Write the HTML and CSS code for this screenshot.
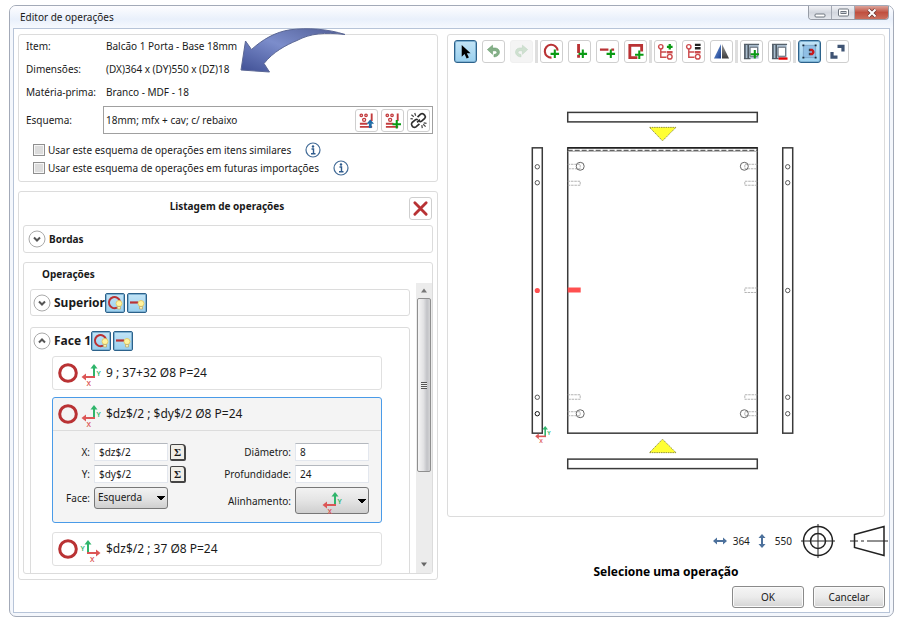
FILE: index.html
```html
<!DOCTYPE html>
<html lang="pt-BR">
<head>
<meta charset="utf-8">
<title>Editor de operações</title>
<link rel="stylesheet" href="styles.css">
</head>
<body>
<svg class="defs" aria-hidden="true">
  <defs>
    <linearGradient id="arrowFill" x1="0" y1="1" x2="1" y2="0">
      <stop offset="0" stop-color="#3f4f94"/><stop offset=".5" stop-color="#7c8dcb"/><stop offset="1" stop-color="#4f5c94"/>
    </linearGradient>
    <linearGradient id="mirrorBlue" x1="0" y1="0" x2="1" y2="1">
      <stop offset="0" stop-color="#7fa3dc"/><stop offset="1" stop-color="#173f91"/>
    </linearGradient>
    <linearGradient id="mirrorGray" x1="0" y1="0" x2="0" y2="1">
      <stop offset="0" stop-color="#9a9a9a"/><stop offset="1" stop-color="#3c3c3c"/>
    </linearGradient>
    <symbol id="plus" viewBox="0 0 10 10"><path d="M5 0v10M0 5h10" stroke="#0a9a14" stroke-width="2.400"/></symbol>
    <symbol id="axis-left" viewBox="0 0 20 20">
      <path d="M13 14.500V4" stroke="#2fb56b" stroke-width="2"/><path d="M9.500 5.500 13 1l3.500 4.500z" fill="#2fb56b"/>
      <path d="M14 14H4" stroke="#dc5656" stroke-width="2"/><path d="M5 10.500.500 14 5 17.500z" fill="#dc5656"/>
      <text x="15.500" y="12.500" class="axis-y">Y</text><text x="5.500" y="22.500" class="axis-x">X</text>
    </symbol>
    <symbol id="axis-right" viewBox="0 0 20 20">
      <path d="M7 14.500V4" stroke="#2fb56b" stroke-width="2"/><path d="M3.500 5.500 7 1l3.500 4.500z" fill="#2fb56b"/>
      <path d="M6 14h10" stroke="#dc5656" stroke-width="2"/><path d="M15 10.500l4.500 3.500-4.500 3.500z" fill="#dc5656"/>
      <text x="-.5" y="12" class="axis-y">Y</text><text x="9" y="22.500" class="axis-x">X</text>
    </symbol>
    <symbol id="ring" viewBox="0 0 20 20"><circle cx="10" cy="10" r="8.300" fill="none" stroke="#b93234" stroke-width="3"/></symbol>
    <symbol id="bulb" viewBox="0 0 8 10">
      <circle cx="4" cy="3.500" r="3" fill="#fff3a0" stroke="#e0c45c" stroke-width=".8"/><path d="M2.500 6.500h3v2.500h-3z" fill="#f7efb8" stroke="#b9a050" stroke-width=".6"/>
    </symbol>
    <symbol id="ring-bulb" viewBox="0 0 18 18">
      <path d="M11 13.700A5.600 5.600 0 1 1 14 7.500" fill="none" stroke="#b93234" stroke-width="2"/><use href="#bulb" x="9" y="6" width="8" height="10"/>
    </symbol>
    <symbol id="bar-bulb" viewBox="0 0 18 18">
      <path d="M2 8.500h8" stroke="#b93234" stroke-width="2.200"/><use href="#bulb" x="9" y="6" width="8" height="10"/>
    </symbol>
    <symbol id="scheme" viewBox="0 0 18 18">
      <g fill="none" stroke="#c33c3e" stroke-width="1.400"><circle cx="3.500" cy="3.500" r="1.300"/><circle cx="8.500" cy="3.500" r="1.300"/><circle cx="6.500" cy="8.300" r="1.600"/></g>
      <path d="M14.500 1.500v8M2 12.500h8M2 15.800h13" stroke="#c33c3e" stroke-width="2"/>
    </symbol>
    <symbol id="info" viewBox="0 0 16 16">
      <circle cx="8" cy="8" r="7" fill="#fff" stroke="#426b97" stroke-width="1.200"/>
      <circle cx="8" cy="4.500" r="1.200" fill="#2f5b8c"/><path d="M6.500 7h2v4.500M6 11.800h4.500" fill="none" stroke="#2f5b8c" stroke-width="1.400"/>
    </symbol>
    <symbol id="chevron-down" viewBox="0 0 18 18"><circle cx="9" cy="9" r="8" fill="#fff" stroke="#aaa"/><path d="M6 7.500l3 3 3-3" fill="none" stroke="#555" stroke-width="2"/></symbol>
    <symbol id="chevron-up" viewBox="0 0 18 18"><circle cx="9" cy="9" r="8" fill="#fff" stroke="#aaa"/><path d="M6 10.500l3-3 3 3" fill="none" stroke="#555" stroke-width="2"/></symbol>
    <symbol id="tree" viewBox="0 0 18 18">
      <path d="M4 6v9h6M4 9.500h6" fill="none" stroke="#cc4a4c" stroke-width="1.500"/>
      <circle cx="4" cy="4" r="2.300" fill="#fff" stroke="#cc4a4c" stroke-width="1.500"/><circle cx="13.500" cy="14.500" r="2.500" fill="#fff" stroke="#cc4a4c" stroke-width="1.500"/>
      <path d="M10.500 9.800h6" stroke="#cc4a4c" stroke-width="2.600"/>
    </symbol>
    <symbol id="panel" viewBox="0 0 18 18">
      <path d="M1.500 1.500h15v15h-15z" fill="#a9bccd"/>
      <path d="M1 1.500h16M1 16.500h7" stroke="#55606a" stroke-width="1.200"/>
      <path d="M2 2v14.500M5.500 2v14.500" stroke="#48525c" stroke-width="1.600"/>
      <path d="M7.500 4.500h8v9.500h-8z" fill="#fff" stroke="#5a6570"/>
    </symbol>
  </defs>
</svg>

<main class="window">
  <header class="titlebar">
    <h1 class="title">Editor de operações</h1>
    <div class="window-controls">
      <button class="wc" aria-label="Minimizar"><svg viewBox="0 0 22 12"><rect x="6" y="7" width="10" height="3" rx="1" fill="#fff" stroke="#6d747e"/></svg></button>
      <button class="wc" aria-label="Maximizar"><svg viewBox="0 0 22 12"><rect x="6.500" y="2" width="10" height="7" rx="1" fill="#fff" stroke="#6d747e"/><rect x="9" y="4.500" width="5" height="2" fill="#ccd2da" stroke="#6d747e"/></svg></button>
      <button class="wc wc-close" aria-label="Fechar"><svg viewBox="0 0 22 12"><path d="M7.500 2.500l7 7m0-7l-7 7" stroke="#6c3a36" stroke-width="3.600"/><path d="M7.500 2.500l7 7m0-7l-7 7" stroke="#fff" stroke-width="2"/></svg></button>
    </div>
  </header>

  <div class="content">
    <div class="left">
      <section class="box item-box">
        <dl class="facts">
          <dt>Item:</dt><dd>Balcão 1 Porta - Base 18mm</dd>
          <dt>Dimensões:</dt><dd>(DX)364 x (DY)550 x (DZ)18</dd>
          <dt>Matéria-prima:</dt><dd>Branco - MDF - 18</dd>
        </dl>
        <div class="scheme-row">
          <label for="scheme-name">Esquema:</label>
          <div class="scheme-field">
            <input id="scheme-name" type="text" value="18mm; mfx + cav; c/ rebaixo">
            <button class="tool" aria-label="Carregar esquema"><svg viewBox="0 0 18 18"><use href="#scheme"/><path d="M13 17v-5" stroke="#1d6aa5" stroke-width="3"/><path d="M9 12.500l4-4.500 4 4.500z" fill="#1d6aa5"/></svg></button>
            <button class="tool" aria-label="Adicionar esquema"><svg viewBox="0 0 18 18"><use href="#scheme"/><use href="#plus" x="9" y="8.500" width="9" height="9"/></svg></button>
            <button class="tool" aria-label="Desvincular esquema"><svg viewBox="0 0 18 18"><g fill="none" stroke="#2d2d2d" stroke-width="1.800"><path d="M8 5.500l3.200-3.200q1.600-1.300 3.200 0l1.200 1.200q1.300 1.600 0 3.200l-3.300 3q-1.300 1-2.600 0"/><path d="M10 12.500l-3.700 3.200q-1.600 1.300-3.200 0l-1-1.200q-1.300-1.600 0-3.200l3.500-3q1.300-1 2.600 0M7.500 11l3-3"/></g><path d="M1.500 3l2.500 2M5 1l1 3M.5 7l2.500.300M16.500 15.500L14 13M12.500 14l.500 3M14.500 11.500l3 .5" stroke="#444" stroke-width="1.300"/></svg></button>
          </div>
        </div>
        <div class="checks">
          <div class="check"><input type="checkbox" id="similar"><label for="similar">Usar este esquema de operações em itens similares</label><svg class="info"><use href="#info"/></svg></div>
          <div class="check"><input type="checkbox" id="future"><label for="future">Usar este esquema de operações em futuras importações</label><svg class="info"><use href="#info"/></svg></div>
        </div>
        <svg class="callout" viewBox="0 0 108 48" aria-hidden="true"><path d="M5.500 14l6 8.500C22 13 35 5 50 2.800 68 .5 88 2 105 7.500 85 5 70 6.500 57 13.500 46 18 33 25 24 36.500l5.500 8.500-28.500-2z" fill="url(#arrowFill)" stroke="#5b6794"/></svg>
      </section>

      <section class="box list-box">
        <div class="list-head">
          <h2>Listagem de operações</h2>
          <button class="tool" aria-label="Excluir"><svg viewBox="0 0 18 18"><path d="M3 3l12 12M15 3L3 15" stroke="#b83234" stroke-width="3" stroke-linecap="round"/></svg></button>
        </div>
        <div class="box expander edges">
          <button class="round" aria-label="Expandir Bordas"><svg><use href="#chevron-down"/></svg></button><h3>Bordas</h3>
        </div>
        <div class="box ops">
          <h3 class="ops-title">Operações</h3>
          <div class="scroll">
            <div class="scroll-body">
              <div class="box expander">
                <button class="round" aria-label="Expandir Superior"><svg><use href="#chevron-down"/></svg></button><h4>Superior</h4>
                <div class="toggles">
                  <button class="toggle" aria-label="Exibir furos"><svg><use href="#ring-bulb"/></svg></button>
                  <button class="toggle" aria-label="Exibir rasgos"><svg><use href="#bar-bulb"/></svg></button>
                </div>
              </div>
              <div class="box face">
                <div class="face-head">
                  <button class="round" aria-label="Recolher Face 1"><svg><use href="#chevron-up"/></svg></button><h4>Face 1</h4>
                  <div class="toggles">
                    <button class="toggle" aria-label="Exibir furos"><svg><use href="#ring-bulb"/></svg></button>
                    <button class="toggle" aria-label="Exibir rasgos"><svg><use href="#bar-bulb"/></svg></button>
                  </div>
                </div>
                <article class="op"><div class="op-head"><svg class="i20"><use href="#ring"/></svg><svg class="axis"><use href="#axis-left"/></svg><span>9 ; 37+32 Ø8 P=24</span></div></article>
                <article class="op selected">
                  <div class="op-head"><svg class="i20"><use href="#ring"/></svg><svg class="axis"><use href="#axis-left"/></svg><span>$dz$/2 ; $dy$/2 Ø8 P=24</span></div>
                  <div class="op-form">
                    <div class="fields">
                      <label for="fx">X:</label><input id="fx" value="$dz$/2"><button class="sigma" aria-label="Fórmula X">Σ</button>
                      <label for="fy">Y:</label><input id="fy" value="$dy$/2"><button class="sigma" aria-label="Fórmula Y">Σ</button>
                      <label for="ff">Face:</label><select id="ff"><option>Esquerda</option></select>
                    </div>
                    <div class="fields fields-right">
                      <label for="fd">Diâmetro:</label><input id="fd" value="8">
                      <label for="fp">Profundidade:</label><input id="fp" value="24">
                      <label for="fa">Alinhamento:</label><button id="fa" class="align" aria-haspopup="listbox"><svg class="axis"><use href="#axis-left"/></svg></button>
                    </div>
                  </div>
                </article>
                <article class="op"><div class="op-head"><svg class="i20"><use href="#ring"/></svg><svg class="axis"><use href="#axis-right"/></svg><span>$dz$/2 ; 37 Ø8 P=24</span></div></article>
              </div>
            </div>
            <div class="scrollbar" aria-hidden="true">
              <svg viewBox="0 0 16 14" class="sb-arrow"><path d="M5 9h6L8 5z" fill="#777"/></svg>
              <div class="sb-track"><div class="sb-thumb"><i class="grip"></i></div></div>
              <svg viewBox="0 0 16 14" class="sb-arrow"><path d="M5 4h6L8 8z" fill="#666"/></svg>
            </div>
          </div>
        </div>
      </section>
    </div>

    <div class="right">
      <section class="box drawing">
        <div class="toolbar">
          <button class="tool on" aria-label="Selecionar"><svg viewBox="0 0 18 18"><path d="M5 2v12.500l3-2.800 2.200 4.800 2.400-1.200-2.200-4.500h4z" fill="#000"/></svg></button>
          <button class="tool" aria-label="Desfazer"><svg viewBox="0 0 18 18"><path d="M2.500 7L8 2.300v3h3c6 .5 6 9-1.500 9.400v-2.500c4-.5 4-3.700 1-4H8V12z" fill="#85b088" stroke="#659a6a" stroke-width=".6"/></svg></button>
          <button class="tool off" aria-label="Refazer" disabled><svg viewBox="0 0 18 18"><path d="M15.500 7L10 2.300v3H7c-6 .5-6 9 1.500 9.400v-2.500c-4-.5-4-3.700-1-4H10V12z" fill="#cfe0d0" stroke="#c0d6c2" stroke-width=".6"/></svg></button>
          <i class="sep"></i>
          <button class="tool" aria-label="Adicionar furo"><svg viewBox="0 0 18 18"><path d="M9 15.500A6.800 6.800 0 1 1 15.500 8" fill="none" stroke="#b93234" stroke-width="2.200"/><use href="#plus" x="8" y="7" width="9" height="9"/></svg></button>
          <button class="tool" aria-label="Adicionar rasgo vertical"><svg viewBox="0 0 18 18"><path d="M8 1v9.500M8 12.500v3" stroke="#b93234" stroke-width="3"/><use href="#plus" x="8" y="7" width="9" height="9"/></svg></button>
          <button class="tool" aria-label="Adicionar rasgo horizontal"><svg viewBox="0 0 18 18"><path d="M1 7h9M13 7h3" stroke="#b93234" stroke-width="2.500"/><use href="#plus" x="8" y="7" width="9" height="9"/></svg></button>
          <button class="tool" aria-label="Adicionar contorno"><svg viewBox="0 0 18 18"><path d="M11 15.500H3v-13h12.500V9" fill="none" stroke="#b93234" stroke-width="3"/><use href="#plus" x="8.500" y="8" width="9" height="9"/></svg></button>
          <i class="sep"></i>
          <button class="tool" aria-label="Adicionar grupo"><svg viewBox="0 0 18 18"><use href="#tree"/><path d="M13.500 1v6M10.500 4h6" stroke="#0a9a14" stroke-width="2.400"/></svg></button>
          <button class="tool" aria-label="Listar grupo"><svg viewBox="0 0 18 18"><use href="#tree"/><path d="M10.500 2h6M10.500 5.500h6" stroke="#222" stroke-width="2.600"/></svg></button>
          <button class="tool" aria-label="Espelhar"><svg viewBox="0 0 18 18"><path d="M8.500 1v15.500H1z" fill="url(#mirrorBlue)"/><path d="M9.500 1v15.500H17z" fill="url(#mirrorGray)"/></svg></button>
          <i class="sep"></i>
          <button class="tool" aria-label="Adicionar painel"><svg viewBox="0 0 18 18"><use href="#panel"/><use href="#plus" x="8" y="7.500" width="9" height="9"/></svg></button>
          <button class="tool" aria-label="Remover painel"><svg viewBox="0 0 18 18"><use href="#panel"/><path d="M8 16.500h9.500" stroke="#e80000" stroke-width="2.400"/></svg></button>
          <i class="sep"></i>
          <button class="tool on" aria-label="Atração"><svg viewBox="0 0 18 18"><path d="M2.500 2.500h13v13h-13z" fill="#8fbfe4" stroke="#6e97bb" stroke-width=".7"/><path d="M1.500 1.500h2v2h-2zM14.500 1.500h2v2h-2zM1.500 14.500h2v2h-2zM14.500 14.500h2v2h-2z" fill="#1c2c3c"/><path d="M9.500 7.500h2.200q2.800 2 0 4.200H9.500" fill="none" stroke="#c8191c" stroke-width="2.600"/><path d="M9 6.200v2.600M9 10.400V13" stroke="#3a3f46" stroke-width="1.400"/></svg></button>
          <button class="tool" aria-label="Ajustar à tela"><svg viewBox="0 0 18 18"><path d="M9 3.500h5.800V9M3.200 9.500V15H9" fill="none" stroke="#3f5474" stroke-width="3.400"/></svg></button>
        </div>
        <svg class="canvas" viewBox="448 66 437 450" role="img" aria-label="Desenho da peça com furações">
          <g fill="#fff" stroke="#3a3a3a" stroke-width="1.500">
            <rect x="568" y="112.500" width="190" height="9.500"/><rect x="568" y="460" width="190" height="9.500"/>
            <rect x="532.500" y="148" width="10" height="286"/><rect x="783.500" y="148" width="10" height="286"/>
            <rect x="568" y="148" width="190" height="286"/>
          </g>
          <path d="M568 148h190" stroke="#222" stroke-width="1.500"/><path d="M568 151.500h190" stroke="#aaa"/><path d="M568 150.500h190" stroke="#444" stroke-dasharray="5 2"/>
          <g fill="#ff3" stroke="#77772a" stroke-width=".8" stroke-dasharray="1.500 .8"><path d="M650 127.500h26.500L663 141z"/><path d="M650 453.500h26.500L663 440z"/></g>
          <g fill="none" stroke="#aaa" stroke-width=".9" stroke-dasharray="2.500 .8">
            <path d="M568 164.500h12.500v4.500H568M568 181.500h12.500v4H568M568 395.500h12.500v4.500H568M568 412.500h12.500v4H568M758 164.500h-12.500v4.500H758M758 181.500h-12.500v4H758M758 288.500h-12.500v4.500H758M758 395.500h-12.500v4.500H758M758 412.500h-12.500v4H758"/>
          </g>
          <g fill="none" stroke="#666"><circle cx="580.500" cy="166.500" r="4"/><circle cx="745" cy="166.500" r="4"/><circle cx="580.500" cy="414.500" r="4"/><circle cx="745" cy="414.500" r="4"/></g>
          <g fill="#fff" stroke="#555"><circle cx="537.500" cy="167" r="2.200"/><circle cx="537.500" cy="183" r="2.200"/><circle cx="537.500" cy="398" r="2.200"/><circle cx="537.500" cy="414.500" r="2.200" stroke="#111"/>
            <circle cx="788.500" cy="167" r="2.200"/><circle cx="788.500" cy="183" r="2.200"/><circle cx="788.500" cy="291" r="2.200"/><circle cx="788.500" cy="398" r="2.200"/><circle cx="788.500" cy="414.500" r="2.200"/></g>
          <circle cx="537.500" cy="291" r="2.600" fill="#ff5050"/><rect x="568" y="288" width="13" height="5" fill="#ff5050"/>
          <use href="#axis-left" x="535" y="426" width="16" height="16"/>
        </svg>
      </section>
      <div class="dims">
        <svg class="arrow-ico" viewBox="0 0 14 14"><path d="M3 7h8" stroke="#4d719c" stroke-width="2"/><path d="M4 3.500L0 7l4 3.500zM10 3.500L14 7l-4 3.500z" fill="#4d719c"/></svg><span>364</span>
        <svg class="arrow-ico" viewBox="0 0 14 14"><path d="M7 3v8" stroke="#4d719c" stroke-width="2"/><path d="M3.500 4L7 0l3.500 4zM3.500 10L7 14l3.500-4z" fill="#4d719c"/></svg><span>550</span>
        <svg class="proj" viewBox="0 0 34 34"><g fill="none" stroke="#222"><circle cx="17" cy="17" r="14.500" stroke-width="1.500"/><circle cx="17" cy="17" r="7.500" stroke-width="1.500"/><path d="M17 0v34M0 17h34" stroke-width="1"/></g></svg>
        <svg class="cone" viewBox="0 0 38 34"><path d="M4.500 10.500L34 2.500v29L4.500 23.500z" fill="none" stroke="#222" stroke-width="1.500"/><path d="M0 17h8M11 17h3M17 17h21" stroke="#222"/></svg>
      </div>
      <p class="status">Selecione uma operação</p>
      <div class="actions"><button class="push">OK</button><button class="push">Cancelar</button></div>
    </div>
  </div>
</main>
</body>
</html>
```
FILE: styles.css
```css
* { box-sizing: border-box; }
body {
  margin: 0;
  height: 100vh;
  padding: 5px 8px 6px 9px;
  background: #fff;
  color: #1a1a1a;
  font: 10px/16px "Noto Sans", "Open Sans", sans-serif;
}
button, input, select { font: inherit; color: inherit; margin: 0; padding: 0; }
h1, h2, h3, h4, p, dl, dd { margin: 0; font-size: inherit; }
svg { display: block; overflow: visible; }
symbol { overflow: visible; }
.defs { position: absolute; width: 0; height: 0; }
.axis-x, .axis-y { font: 600 7px "Noto Sans", sans-serif; fill: #dc5656; }
.axis-y { fill: #2fb56b; }

.window {
  height: 100%;
  display: flex;
  flex-direction: column;
  padding: 0 3px 3px;
  border: 1px solid #a3aab8;
  border-radius: 7px;
  background: #f4f7fc;
}
.titlebar {
  flex: none;
  display: flex;
  justify-content: space-between;
  height: 22px;
  margin: 0 -3px;
  padding: 0 4px 0 10px;
  border-radius: 6px 6px 0 0;
  background: linear-gradient(#fdfdff, #e9f0fb 60%, #f6f9fe);
}
.title { font-weight: 400; line-height: 22px; }
.window-controls { display: flex; height: 14px; border: 1px solid #979ca6; border-top: 0; border-radius: 0 0 4px 4px; overflow: hidden; }
.wc { width: 23px; border: 0; border-right: 1px solid #a3a8b2; background: linear-gradient(#f3f4f7, #d3d7df 50%, #e3e6ec); }
.wc svg { width: 22px; height: 12px; margin: auto; }
.wc-close { width: 33px; border-right: 0; background: linear-gradient(#dca39a, #c0503f 50%, #cb6f5d); }

.content {
  flex: 1;
  min-height: 0;
  display: grid;
  grid-template-columns: minmax(0, 420fr) minmax(0, 438fr);
  gap: 9px;
  padding: 5px 4px 4px 4px;
  border: 1px solid #b7c4d8;
  background: #fff;
}
.box { border: 1px solid #dcdcdc; border-radius: 3px; }
.left { display: flex; flex-direction: column; gap: 9px; min-height: 0; padding-bottom: 28px; }

.item-box { position: relative; flex: none; padding: 0 4px 4px 7px; }
.facts { display: grid; grid-template-columns: 80px 1fr; line-height: 23px; }
.scheme-row { display: flex; align-items: center; margin-top: 2px; }
.scheme-row label { width: 77px; }
.scheme-field { flex: 1; display: flex; align-items: center; gap: 3px; height: 28px; padding: 0 2px; border: 1px solid #a0a0a0; }
.scheme-field input { flex: 1; min-width: 0; border: 0; outline: 0; background: none; }
.checks { margin: 7px 0 0 7px; }
.check { display: flex; align-items: center; height: 18px; }
.check input { appearance: none; width: 12px; height: 12px; margin-right: 3px; border: 1px solid #8f8f8f; background: #dcdcdc; box-shadow: inset 0 0 0 1px #f6f6f6; }
.info { width: 16px; height: 16px; margin-left: 14px; }
.callout { position: absolute; left: 221px; top: -8px; width: 108px; height: 48px; }

.tool { flex: none; display: grid; place-items: center; width: 23px; height: 23px; border: 1px solid #cfcfcf; border-radius: 3px; background: #fff; }
.tool svg { width: 17px; height: 17px; }
.tool.on, .toggle { border: 1px solid #2c628b; background: linear-gradient(#c3e4f6, #98cfee); box-shadow: inset 0 0 0 1px #7fb2d3; }
.tool.off { background: #f4f4f4; border-color: #f0f0f0; }

.list-box { flex: 1; min-height: 0; display: flex; flex-direction: column; padding: 5px 4px 5px; }
.list-head { flex: none; display: flex; align-items: center; height: 23px; padding-right: 1px; }
.list-head h2 { flex: 1; padding-left: 22px; line-height: 18px; text-align: center; align-self: flex-start; }
.expander, .face-head { display: flex; align-items: center; padding-left: 2px; }
.expander { flex: none; height: 27px; }
.edges { margin-top: 5px; height: 28px; padding-left: 4px; }
.edges h3 { margin-left: 3px; }
.round { width: 18px; height: 18px; border: 0; background: none; }
.round svg { width: 18px; height: 18px; }
h4 { margin-left: 3px; font-size: 12px; }
.toggles { display: flex; gap: 2px; }
.toggle { display: grid; place-items: center; width: 20px; height: 20px; border-radius: 2px; }
.toggle svg { width: 18px; height: 18px; }
.ops { flex: 1; min-height: 0; display: flex; flex-direction: column; margin-top: 9px; }
.ops-title { padding: 3px 18px 1px; }
.scroll { flex: 1; min-height: 0; display: flex; gap: 6px; }
.scroll-body { flex: 1; min-width: 0; overflow: hidden; padding: 6px 0 0 6px; }
.face { margin-top: 11px; padding: 0 27px 30px 21px; }
.face-head { height: 25px; margin: 0 0 3px -21px; }

.op { border: 1px solid #e0e0e0; border-radius: 3px; margin-bottom: 7px; }
.op-head { display: flex; align-items: center; height: 32px; padding-left: 5px; font-size: 12px; }
.i20 { width: 20px; height: 20px; margin-right: 3px; }
.axis { width: 20px; height: 20px; }
.op-head .axis { margin-right: 5px; }
.selected { border-color: #4a9be8; background: #f4f4f4; margin-bottom: 9px; }
.op-form { display: flex; justify-content: space-between; padding: 12px 12px 8px; border-top: 1px solid #dcdcdc; }
.fields { display: grid; grid-template-columns: 25px 74px 16px; grid-template-rows: 18px 18px 22px; gap: 4px; align-content: start; align-items: center; }
.fields label { text-align: right; white-space: nowrap; }
.fields input { width: 100%; min-width: 0; height: 18px; padding: 0 4px; border: 1px solid #e3e7ee; border-top-color: #b4b8be; background: #fff; }
.fields-right { grid-template-columns: auto 74px; grid-template-rows: 18px 18px 27px; }
.sigma { width: 16px; height: 17px; margin-left: -2px; border: 1px solid #444; border-right-width: 2px; border-bottom-width: 2px; border-radius: 2px 4px 2px 2px; background: #f0eee8; font: bold 11px/12px "Liberation Serif", serif; }
.fields select, .align {
  width: 100%;
  height: 22px;
  border: 1px solid #777;
  border-radius: 3px;
  appearance: none;
  background:
    conic-gradient(from -45deg at 50% 100%, #000 90deg, transparent 0) right 2px center / 8px 4px no-repeat,
    linear-gradient(#f2f2f2, #e4e4e4 50%, #cfcfcf);
}
.fields select { padding: 0 0 2px 3px; }
.fields .align { height: 27px; display: grid; place-items: center; }

.scrollbar { flex: none; width: 16px; display: flex; flex-direction: column; background: #ececec; }
.sb-arrow { width: 16px; height: 15px; }
.sb-track { flex: 1; padding: 0 1px; }
.sb-thumb { height: 67%; display: grid; place-items: center; border: 1px solid #8f8f8f; border-radius: 2px; background: linear-gradient(90deg, #f5f5f5, #e2e2e4 45%, #c2c3c7 75%, #d4d4d6); }
.grip { width: 6px; height: 7px; background: repeating-linear-gradient(#555 0 1px, #eee 1px 2px); }

.right { display: flex; flex-direction: column; min-height: 0; }
.drawing { flex: 1; min-height: 0; display: flex; flex-direction: column; padding: 5px 0 0; }
.toolbar { flex: none; display: flex; gap: 5px; padding-left: 6px; }
.sep { width: 3px; height: 23px; margin: 0 -3px; background: #dedede; }
.canvas { flex: 1; min-height: 0; width: 100%; margin-top: 2px; }
.dims { flex: none; display: flex; align-items: center; justify-content: flex-end; height: 34px; margin-top: 7px; }
.dims span { margin: 0 5px 0 6px; }
.arrow-ico { width: 14px; height: 14px; }
.proj { width: 34px; height: 34px; margin-left: 4px; }
.cone { width: 38px; height: 34px; margin: 0 -3px 0 15px; }
.status { flex: none; margin: 6px 0; font-size: 12px; font-weight: 700; text-align: center; color: #000; }
.actions { flex: none; display: flex; justify-content: flex-end; gap: 9px; }
.push { width: 72px; height: 22px; border: 1px solid #8a8a8a; border-radius: 3px; background: linear-gradient(#f5f5f5, #ebebeb 50%, #d4d4d4); box-shadow: inset 0 0 0 1px #fafafa; }
```
